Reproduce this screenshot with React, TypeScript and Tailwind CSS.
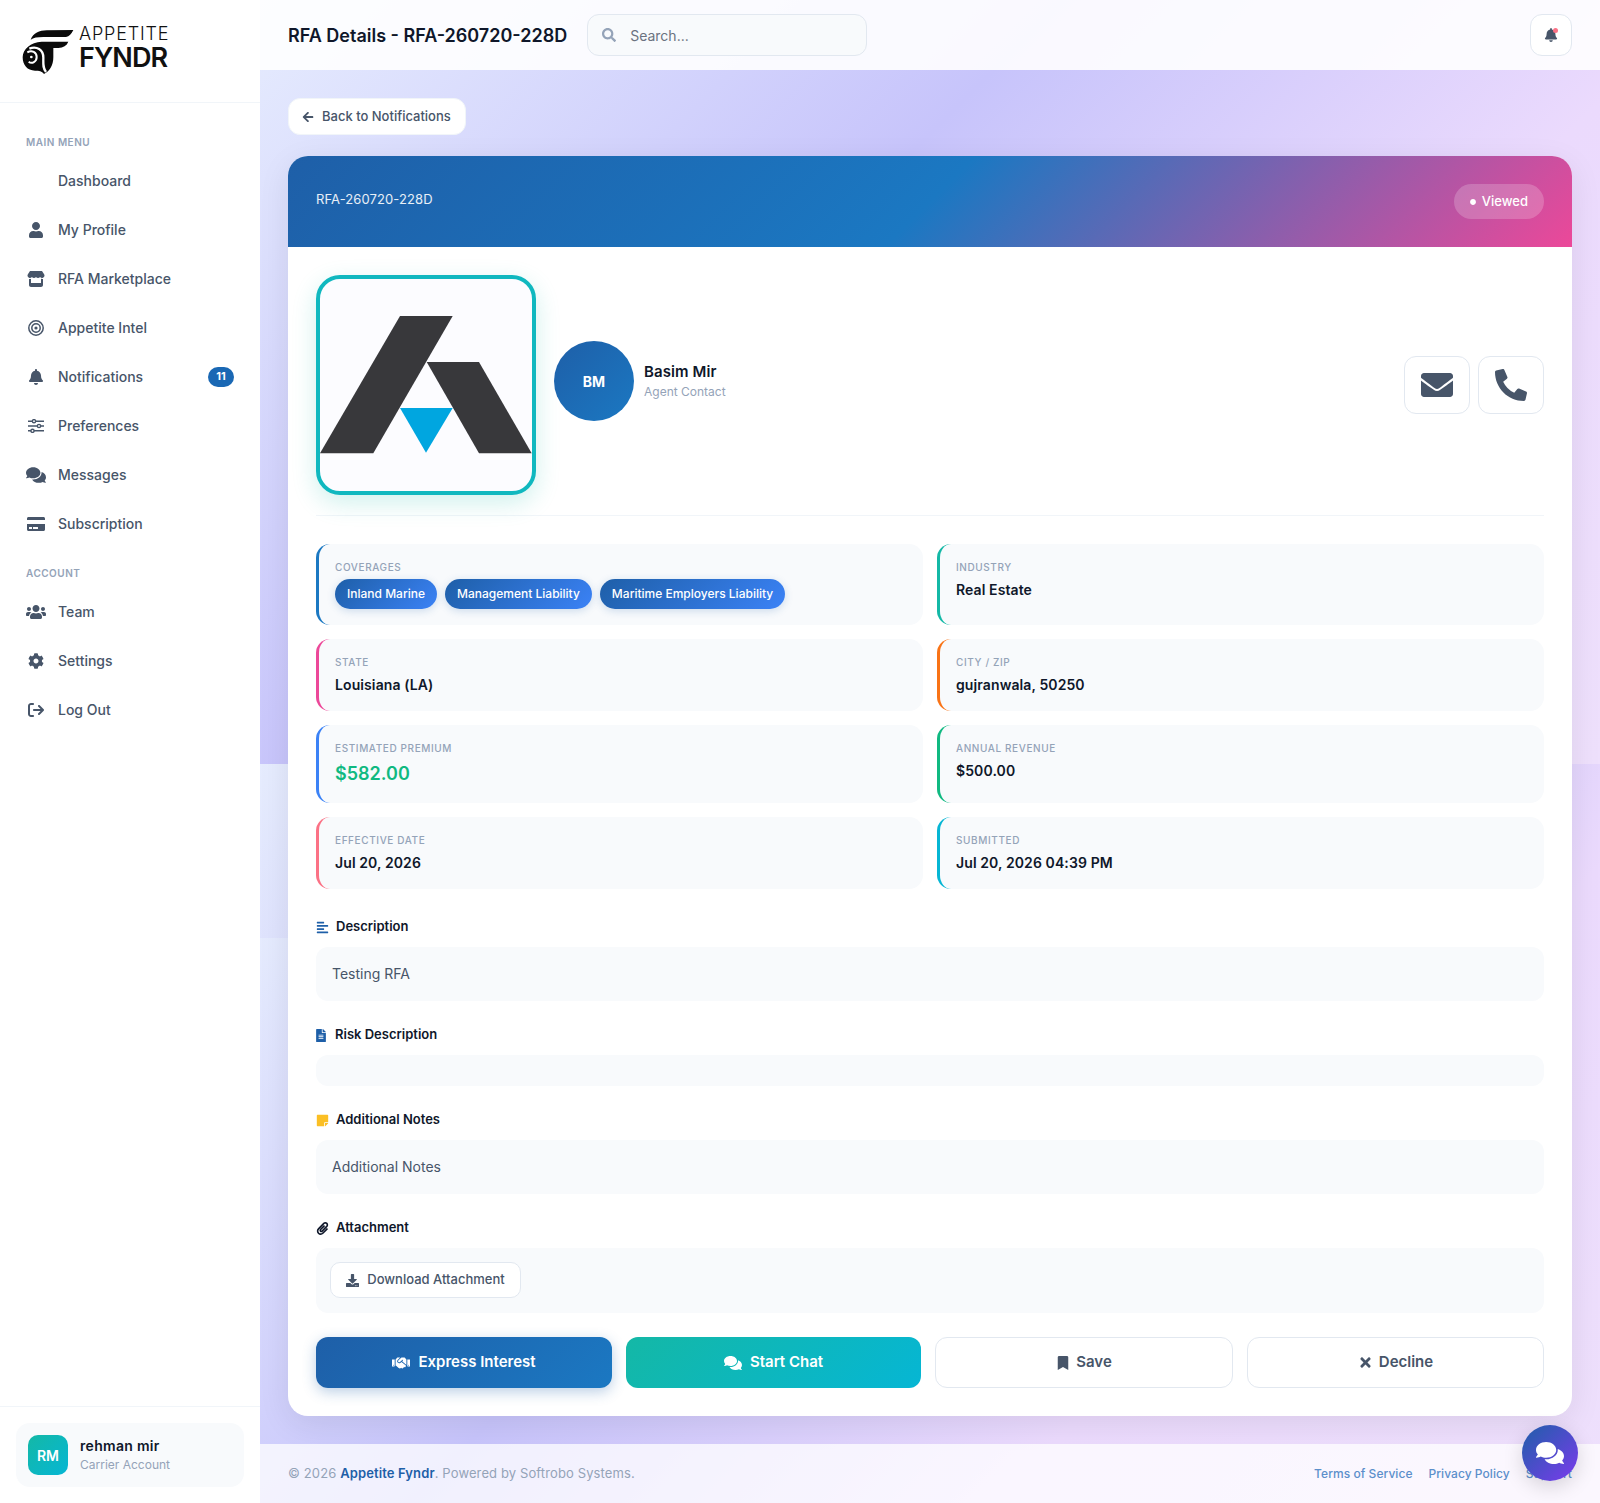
import type { ReactNode } from 'react';
import {
  FaUser, FaBell, FaComments, FaCreditCard, FaUsers, FaCog,
  FaArrowLeft, FaSearch, FaEnvelope, FaPhoneAlt, FaAlignLeft, FaFileAlt,
  FaStickyNote, FaPaperclip, FaDownload, FaHandshake, FaBookmark, FaTimes, FaCircle,
} from 'react-icons/fa';
import { FaStore, FaArrowRightFromBracket } from 'react-icons/fa6';

function NavItem({ icon, label, badge }: { icon?: ReactNode; label: string; badge?: string }) {
  return (
    <div className="flex h-[45px] items-center gap-3 px-3 mb-1 text-[14px] font-medium text-[#475569]">
      <span className="flex w-5 justify-center text-[16px]">{icon}</span>
      <span className="flex-1">{label}</span>
      {badge && (
        <span className="flex h-5 w-[26px] items-center justify-center rounded-full bg-[#1a68b4] text-[11px] font-bold text-white">
          {badge}
        </span>
      )}
    </div>
  );
}

function Info({ label, border, children }: { label: string; border: string; children: ReactNode }) {
  return (
    <div className={`rounded-[14px] border-l-[3px] bg-[#f8fafc] px-4 py-4 ${border}`}>
      <div className="mb-1 text-[10px] leading-[15px] font-medium uppercase tracking-[0.6px] text-[#94a3b8]">{label}</div>
      {children}
    </div>
  );
}

function Value({ children }: { children: ReactNode }) {
  return <div className="text-[14px] leading-[21px] font-semibold tracking-[0.1px] text-[#0f172a]">{children}</div>;
}

function Chip({ children }: { children: ReactNode }) {
  return (
    <span className="flex h-[30px] items-center rounded-full bg-[linear-gradient(135deg,#1e5fa8,#3b82f6)] px-3 text-[12px] font-medium text-white shadow-[0_2px_8px_rgba(30,95,168,0.2)]">
      {children}
    </span>
  );
}

function Heading({ icon, children, gap = 'gap-[7px]' }: { icon: ReactNode; children: ReactNode; gap?: string }) {
  return (
    <div className={`mb-[10px] flex h-[20px] items-center text-[13px] font-semibold text-[#0f172a] ${gap}`}>
      {icon}
      {children}
    </div>
  );
}

function SlidersIcon() {
  return (
    <svg viewBox="0 0 16 14" width="16" height="14" fill="none" stroke="currentColor" strokeWidth="1.4">
      <path d="M0 2.2H16M0 7H16M0 11.8H16" />
      <circle cx="6" cy="2.2" r="1.6" fill="#fff" />
      <circle cx="11" cy="7" r="1.6" fill="#fff" />
      <circle cx="4.5" cy="11.8" r="1.6" fill="#fff" />
    </svg>
  );
}

function BullseyeIcon() {
  return (
    <svg viewBox="0 0 16 16" width="16" height="16" fill="none" stroke="currentColor" strokeWidth="1.5">
      <circle cx="8" cy="8" r="7.2" />
      <circle cx="8" cy="8" r="4.2" />
      <circle cx="8" cy="8" r="1.6" fill="currentColor" stroke="none" />
    </svg>
  );
}

function FyndrLogo() {
  return (
    <div className="flex items-center">
      <svg viewBox="66 80 156 138" width="52" height="46" className="mt-[3px]">
        <path d="M92 112C100 92 118 84 140 84L220 83C214 95 208 102 198 104L130 104C112 104 100 106 92 112Z" fill="#0a0a0a" />
        <path d="M125 118L205 118C200 130 190 136 175 137L160 137L160 165C160 190 148 208 132 215C125 206 118 205 105 205C82 205 68 188 68 165C68 140 92 120 125 118Z" fill="#0a0a0a" />
        <path d="M88 139C110 130 130 142 130 166C130 186 128 196 138 209" fill="none" stroke="#fff" strokeWidth="7" />
        <path d="M82 150C96 142 110 150 110 164C110 178 96 186 86 178" fill="none" stroke="#fff" strokeWidth="6" />
        <circle cx="94" cy="164" r="4" fill="#fff" />
      </svg>
      <div className="mb-[5px] ml-[5px] flex flex-col">
        <span className="text-[18px] leading-[18px] font-light tracking-[0.8px] text-[#111]">APPETITE</span>
        <span className="mt-[3px] text-[27px] leading-[24px] font-semibold tracking-[-0.9px] text-[#111]">FYNDR</span>
      </div>
    </div>
  );
}

export default function App() {
  return (
    <div className="flex min-h-screen [font-family:Inter,sans-serif] [background:linear-gradient(135deg,#f0f9ff_0%,#c7c4fb_45%,#ebdafd_72%,#eee0fc_100%)_0_938px/100%_565px_no-repeat,linear-gradient(135deg,#f0f9ff_0%,#c7c4fb_45%,#ebdafd_72%,#eee0fc_100%)_0_0/100%_764px]">
      {/* Sidebar */}
      <aside className="flex w-[260px] shrink-0 flex-col bg-white">
        <div className="flex h-[103px] items-center border-b border-[#f1f5f9] pl-[22px] pb-[2px]">
          <FyndrLogo />
        </div>
        <nav className="px-[14px] pt-8">
          <div className="mb-2 px-3 text-[10px] leading-[15px] font-semibold tracking-[0.5px] text-[#94a3b8]">MAIN MENU</div>
          <NavItem label="Dashboard" />
          <NavItem icon={<FaUser />} label="My Profile" />
          <NavItem icon={<FaStore className="text-[18px]" />} label="RFA Marketplace" />
          <NavItem icon={<BullseyeIcon />} label="Appetite Intel" />
          <NavItem icon={<FaBell />} label="Notifications" badge="11" />
          <NavItem icon={<SlidersIcon />} label="Preferences" />
          <NavItem icon={<FaComments className="text-[20px]" />} label="Messages" />
          <NavItem icon={<FaCreditCard className="text-[18px]" />} label="Subscription" />
          <div className="mt-[20px] mb-[8px] px-3 text-[10px] leading-[15px] font-semibold tracking-[0.5px] text-[#94a3b8]">ACCOUNT</div>
          <NavItem icon={<FaUsers className="text-[20px]" />} label="Team" />
          <NavItem icon={<FaCog />} label="Settings" />
          <NavItem icon={<FaArrowRightFromBracket />} label="Log Out" />
        </nav>
        <div className="mt-auto border-t border-[#f1f5f9] p-4">
          <div className="flex h-16 items-center gap-3 rounded-[14px] bg-[#f8fafc] px-3">
            <div className="flex h-10 w-10 items-center justify-center rounded-[10px] bg-[linear-gradient(135deg,#14b8a6,#06b6d4)] text-[14px] font-semibold text-white">RM</div>
            <div>
              <div className="text-[14px] leading-[20px] font-semibold tracking-[0.3px] text-[#0f172a]">rehman mir</div>
              <div className="text-[12px] leading-[18px] text-[#94a3b8]">Carrier Account</div>
            </div>
          </div>
        </div>
      </aside>

      <div className="flex min-w-0 flex-1 flex-col">
        {/* Top bar */}
        <header className="flex h-[70px] items-center bg-white/90 px-[28px]">
          <h1 className="text-[18px] font-semibold text-[#0f172a]">RFA Details - RFA-260720-228D</h1>
          <div className="ml-5 flex h-[42px] w-[280px] items-center rounded-xl border border-[#e2e8f0] bg-[#f8fafc] px-[14px]">
            <FaSearch className="text-[14px] text-[#94a3b8]" />
            <span className="ml-[14px] text-[14px] text-[#6b7280]">Search...</span>
          </div>
          <div className="relative ml-auto flex h-[42px] w-[42px] items-center justify-center rounded-xl border border-[#e2e8f0] bg-white">
            <FaBell className="text-[14px] text-[#475569]" />
            <span className="absolute top-[13px] right-[13px] h-[5px] w-[5px] rounded-full bg-[#fb7185]" />
          </div>
        </header>

        {/* Content */}
        <main className="flex-1 p-[28px]">
          <div className="mb-[21px] flex h-[37px] w-[178px] items-center gap-2 whitespace-nowrap rounded-xl border border-[#f1f5f9] bg-white px-[13px] text-[13px] font-medium text-[#475569]">
            <FaArrowLeft className="shrink-0 text-[12px]" />
            Back to Notifications
          </div>

          <div className="overflow-hidden rounded-[20px] bg-white shadow-[0_8px_32px_rgba(0,0,0,0.08)]">
            <div className="flex h-[91px] items-center justify-between bg-[linear-gradient(135deg,#1e5fa8_0%,#1b78c2_50%,#ec4899_100%)] px-[28px]">
              <span className="mb-[3px] text-[13px] tracking-[0.1px] text-white/90">RFA-260720-228D</span>
              <span className="flex h-[35px] items-center gap-[6px] rounded-full bg-white/20 px-4 text-[13px] font-medium text-white">
                <FaCircle className="text-[6px]" />
                Viewed
              </span>
            </div>

            <div className="p-[28px]">
              {/* Profile row */}
              <div className="flex items-center border-b border-[#f1f5f9] pb-5">
                <div className="h-[220px] w-[220px] overflow-hidden rounded-[24px] border-4 border-[#10b8bf] bg-[#fcfcff] shadow-[0_8px_24px_rgba(20,184,166,0.2)]">
                  <svg viewBox="0 0 212 212" width="212" height="212">
                    <path d="M0 174.3L80 37L132.7 37L53.3 174.3Z" fill="#38383b" />
                    <path d="M106.7 83L159 83L211.7 174.3L159 174.3Z" fill="#38383b" />
                    <path d="M80 129L132.7 129L106 173.7Z" fill="#00a6e0" />
                  </svg>
                </div>
                <div className="mb-2 ml-[18px] flex items-center gap-[10px]">
                  <div className="flex h-20 w-20 items-center justify-center rounded-full bg-[linear-gradient(135deg,#1e5fa8,#1b78c2)] text-[14px] font-bold text-white">BM</div>
                  <div>
                    <div className="text-[15px] leading-[22px] font-semibold tracking-[0.1px] text-[#0f172a]">Basim Mir</div>
                    <div className="text-[12px] leading-[18px] text-[#94a3b8]">Agent Contact</div>
                  </div>
                </div>
                <div className="ml-auto flex gap-2">
                  <div className="flex h-[58px] w-[66px] items-center justify-center rounded-xl border border-[#e2e8f0] text-[32px] text-[#475569]"><FaEnvelope /></div>
                  <div className="flex h-[58px] w-[66px] items-center justify-center rounded-xl border border-[#e2e8f0] text-[32px] text-[#475569]"><FaPhoneAlt /></div>
                </div>
              </div>

              {/* Info grid */}
              <div className="mt-[28px] grid grid-cols-2 gap-[14px]">
                <Info label="Coverages" border="border-[#1b78c2]">
                  <div className="flex gap-2">
                    <Chip>Inland Marine</Chip>
                    <Chip>Management Liability</Chip>
                    <Chip>Maritime Employers Liability</Chip>
                  </div>
                </Info>
                <Info label="Industry" border="border-[#14b8a6]"><Value>Real Estate</Value></Info>
                <Info label="State" border="border-[#ec4899]"><Value>Louisiana (LA)</Value></Info>
                <Info label="City / Zip" border="border-[#f97316]"><Value>gujranwala, 50250</Value></Info>
                <Info label="Estimated Premium" border="border-[#3b82f6]">
                  <div className="text-[18px] leading-[27px] font-semibold text-[#10b981]">$582.00</div>
                </Info>
                <Info label="Annual Revenue" border="border-[#10b981]"><Value>$500.00</Value></Info>
                <Info label="Effective Date" border="border-[#fb7185]"><Value>Jul 20, 2026</Value></Info>
                <Info label="Submitted" border="border-[#06b6d4]"><Value>Jul 20, 2026 04:39 PM</Value></Info>
              </div>

              {/* Text sections */}
              <div className="mt-[28px] mb-6">
                <Heading icon={<FaAlignLeft className="text-[13px] text-[#1e5fa8]" />}>Description</Heading>
                <div className="rounded-xl bg-[#f8fafc] p-4 text-[14px] leading-[22px] text-[#475569]">Testing RFA</div>
              </div>
              <div className="mb-6">
                <Heading icon={<FaFileAlt className="h-[13px] w-[10px] text-[#1e5fa8]" />} gap="gap-[9px]">Risk Description</Heading>
                <div className="h-[31px] rounded-xl bg-[#f8fafc]" />
              </div>
              <div className="mb-6">
                <Heading icon={<FaStickyNote className="text-[13px] text-[#fbbf24]" />}>Additional Notes</Heading>
                <div className="rounded-xl bg-[#f8fafc] p-4 text-[14px] leading-[22px] text-[#475569]">Additional Notes</div>
              </div>
              <div className="mb-6">
                <Heading icon={<FaPaperclip className="text-[13px] text-[#0f172a]" />}>Attachment</Heading>
                <div className="rounded-xl bg-[#f8fafc] px-[14px] pt-[14px] pb-[15px]">
                  <div className="flex h-9 w-[191px] items-center justify-center gap-2 rounded-[10px] border border-[#e2e8f0] bg-white text-[13px] font-medium text-[#475569]">
                    <FaDownload className="text-[13px]" />
                    Download Attachment
                  </div>
                </div>
              </div>

              {/* Actions */}
              <div className="grid grid-cols-[296px_295px_298px_297px] gap-[14px] text-[15px] font-semibold">
                <div className="flex h-[51px] items-center justify-center gap-2 rounded-xl bg-[linear-gradient(135deg,#1e5fa8,#1b78c2)] text-white shadow-[0_4px_14px_rgba(30,95,168,0.3)]">
                  <FaHandshake className="text-[18px]" />
                  Express Interest
                </div>
                <div className="flex h-[51px] items-center justify-center gap-2 rounded-xl bg-[linear-gradient(135deg,#14b8a6,#06b6d4)] text-white">
                  <FaComments className="text-[18px]" />
                  Start Chat
                </div>
                <div className="flex h-[51px] items-center justify-center gap-[6px] rounded-xl border border-[#e2e8f0] bg-white text-[#475569]">
                  <FaBookmark className="text-[14px]" />
                  Save
                </div>
                <div className="flex h-[51px] items-center justify-center gap-[6px] rounded-xl border border-[#e2e8f0] bg-white text-[#475569]">
                  <FaTimes className="text-[15px]" />
                  Decline
                </div>
              </div>
            </div>
          </div>
        </main>

        {/* Footer */}
        <footer className="flex h-[59px] items-center justify-between bg-white/75 px-[28px]">
          <div className="text-[13px] tracking-[0.12px] text-[#94a3b8]">
            © 2026 <span className="font-semibold text-[#1e5fa8]">Appetite Fyndr</span>. Powered by Softrobo Systems.
          </div>
          <div className="flex gap-4 text-[12px] font-medium tracking-[0.05px] text-[#5c8fcb]">
            <span>Terms of Service</span>
            <span>Privacy Policy</span>
            <span>Support</span>
          </div>
        </footer>
      </div>

      <div className="fixed right-[22px] bottom-[22px] flex h-14 w-14 items-center justify-center rounded-full bg-[linear-gradient(135deg,#1e5fa8,#7c3aed)] text-[28px] text-white shadow-[0_6px_20px_rgba(0,0,0,0.15)]">
        <FaComments />
      </div>
    </div>
  );
}
